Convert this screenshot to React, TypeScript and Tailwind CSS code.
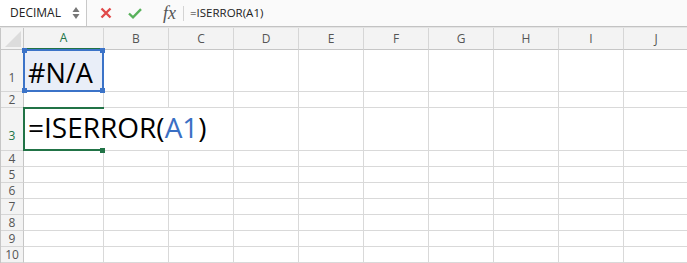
import { Fragment } from "react";

const COLS = ["A", "B", "C", "D", "E", "F", "G", "H", "I", "J"];
const ROWS = [1, 2, 3, 4, 5, 6, 7, 8, 9, 10];

const FONT = { fontFamily: '"Open Sans", "Liberation Sans", sans-serif' };

function Toolbar() {
  return (
    <div className="flex h-[27px] items-stretch border-b border-[#c3c3c3] bg-[#fafafa]">
      {/* Name box */}
      <div className="flex w-[87px] items-center justify-between border-r border-[#c9c9c9] bg-white pl-[10px] pr-[6px]">
        <span className="text-[12px] text-[#222]">DECIMAL</span>
        <svg width="8" height="14" viewBox="0 0 8 14">
          <polygon points="4,1 7.5,6 0.5,6" fill="#777" />
          <polygon points="0.5,8 7.5,8 4,13" fill="#777" />
        </svg>
      </div>

      {/* Cancel / enter / fx */}
      <div className="flex items-center">
        <svg className="ml-[13px]" width="12" height="12" viewBox="0 0 12 12">
          <path d="M1.5 1.5 L10.5 10.5 M10.5 1.5 L1.5 10.5" stroke="#e04a4a" strokeWidth="2.4" strokeLinecap="butt" />
        </svg>
        <svg className="ml-[16px]" width="14" height="11" viewBox="0 0 14 11">
          <path d="M1 5.5 L5 9.3 L13 1.2" stroke="#58b15b" strokeWidth="2.4" fill="none" />
        </svg>
        <span
          className="ml-[21px] text-[18px] italic leading-none text-[#555]"
          style={{ fontFamily: '"Liberation Serif", "DejaVu Serif", serif' }}
        >
          fx
        </span>
        <div className="ml-[7px] h-[15px] w-px bg-[#d4d4d4]" />
        <span className="ml-[6px] text-[11.5px] text-[#222]">=ISERROR(A1)</span>
      </div>
    </div>
  );
}

function ColumnHeader({ col }: { col: string }) {
  const active = col === "A";
  return (
    <div
      className={`flex items-center justify-center bg-[#f3f3f3] text-[12px] ${
        active
          ? "border-r border-b-2 border-r-[#d6d6d6] border-b-[#217346] text-[#217346]"
          : "border-r border-b border-r-[#d6d6d6] border-b-[#c6c6c6] text-[#555]"
      }`}
    >
      {col}
    </div>
  );
}

function RowHeader({ row }: { row: number }) {
  const pad = row === 1 ? "pb-[6px]" : row === 3 ? "pb-[7px]" : "pb-0";
  return (
    <div
      className={`flex items-end justify-center border-r border-b border-r-[#c6c6c6] border-b-[#d6d6d6] bg-[#f3f3f3] text-[12px] leading-[14px] ${pad} ${
        row === 3 ? "text-[#217346]" : "text-[#555]"
      }`}
    >
      {row}
    </div>
  );
}

function Handle({ className }: { className: string }) {
  return <div className={`absolute h-[5px] w-[5px] bg-[#3b73c8] ${className}`} />;
}

function Cell({ row, col }: { row: number; col: string }) {
  if (row === 1 && col === "A") {
    return (
      <div className="relative flex items-end border-r border-b border-[#d9d9d9] bg-[#e9eef8] pb-[5px] pl-[4px]">
        <span className="text-[27px] leading-none text-black">#N/A</span>
        <div className="absolute -top-px -left-px -right-px -bottom-px border-2 border-[#3b73c8]" />
        <Handle className="-top-[2px] -left-[2px]" />
        <Handle className="-top-[2px] -right-[2px]" />
        <Handle className="-bottom-[2px] -left-[2px]" />
        <Handle className="-bottom-[2px] -right-[2px]" />
      </div>
    );
  }
  if (row === 3 && col === "A") {
    return (
      <div className="relative z-10 border-b border-[#d9d9d9]">
        <div className="absolute top-0 bottom-0 left-0 flex w-[187px] items-end bg-white pb-[9px] pl-[4px]">
          <span className="whitespace-nowrap text-[28px] leading-none text-black">
            =ISERROR(<span className="text-[#3a6fc4]">A1</span>)
          </span>
        </div>
        <div className="absolute -top-px -left-px -bottom-px w-[81px] border-t-2 border-l-2 border-b-2 border-[#217346]" />
        <div className="absolute -bottom-[3px] left-[76px] h-[5px] w-[5px] bg-[#217346]" />
      </div>
    );
  }
  return <div className="border-r border-b border-[#d9d9d9] bg-white" />;
}

export default function App() {
  return (
    <div className="h-[263px] w-[687px] overflow-hidden bg-white" style={FONT}>
      <Toolbar />
      <div className="h-px bg-[#e4e4e4]" />
      <div className="grid grid-cols-[23px_80px_repeat(9,65px)] grid-rows-[22px_42px_16px_43px_repeat(7,16px)] border-l border-[#c6c6c6]">
        {/* Corner */}
        <div className="flex items-end justify-end border-r border-b border-[#c6c6c6] bg-[#f3f3f3] p-[2px]">
          <svg width="16" height="16" viewBox="0 0 16 16">
            <polygon points="16,0 16,16 0,16" fill="#dcdcdc" />
          </svg>
        </div>
        {COLS.map((c) => (
          <ColumnHeader key={c} col={c} />
        ))}
        {ROWS.map((r) => (
          <Fragment key={r}>
            <RowHeader row={r} />
            {COLS.map((c) => (
              <Cell key={`${c}${r}`} row={r} col={c} />
            ))}
          </Fragment>
        ))}
      </div>
    </div>
  );
}
